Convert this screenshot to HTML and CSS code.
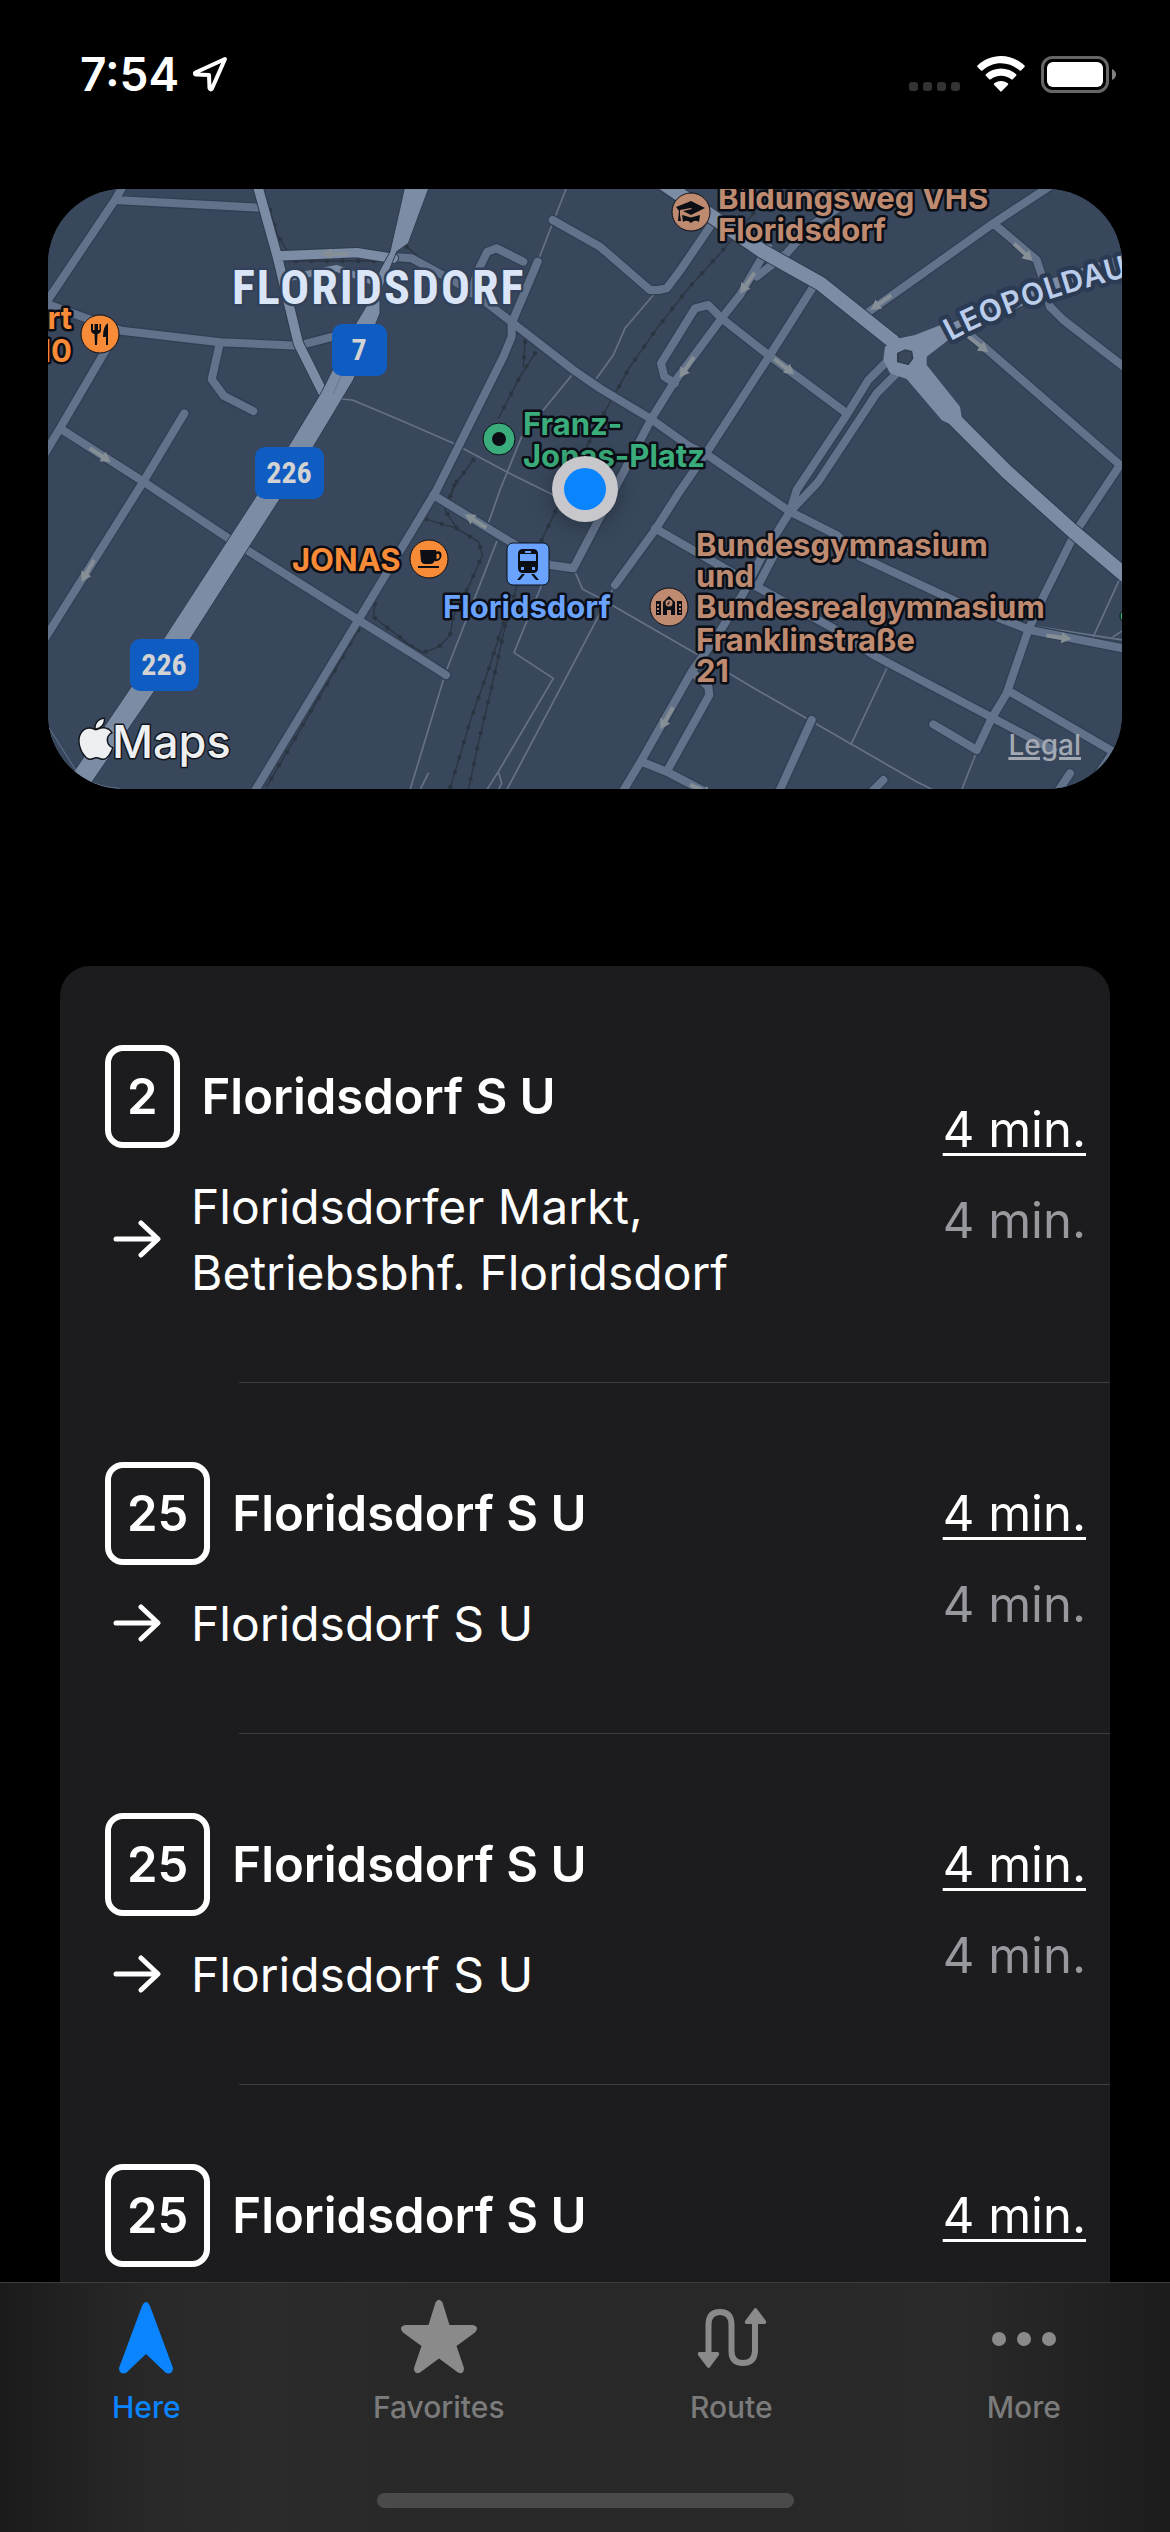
FILE: index.html
```html
<!DOCTYPE html>
<html lang="en">
<head>
<meta charset="utf-8">
<meta name="viewport" content="width=device-width, initial-scale=1">
<title>Departures nearby</title>
<link rel="stylesheet" href="styles.css">
</head>
<body>
<header class="status">
  <div class="status-side">
    <span class="clock">7:54</span>
    <svg class="location" viewBox="0 0 38 38" aria-hidden="true"><path d="M34 4 L4.500 17.500 Q3 19 5 19.500 L18 20 L18.500 33 Q19.500 35.500 21 33.500 Z" fill="none" stroke="#fff" stroke-width="4" stroke-linejoin="round"/></svg>
  </div>
  <div class="status-side status-right">
    <svg class="signal" viewBox="0 0 52 10" aria-hidden="true"><g fill="#333"><rect width="9" height="9" rx="3"/><rect x="14" width="9" height="9" rx="3"/><rect x="28" width="9" height="9" rx="3"/><rect x="42" width="9" height="9" rx="3"/></g></svg>
    <svg class="wifi" viewBox="0 0 48 36" aria-hidden="true"><g fill="#fff"><path d="M24 0C33 0 41 3.500 47.500 9.500Q48 10.200 47.500 11L44 14.600Q43.200 15 42.600 14.500C37.500 9.800 31 7.200 24 7.200S10.500 9.800 5.400 14.500Q4.800 15 4 14.600L.5 11Q0 10.200.5 9.500C7 3.500 15 0 24 0Z"/><path d="M24 12.500C29.800 12.500 35 14.600 39.200 18.300Q39.700 19 39.200 19.700L35.500 23.400Q34.800 23.800 34.200 23.300C31.400 21 28 19.700 24 19.700S16.600 21 13.800 23.300Q13.200 23.800 12.500 23.400L8.800 19.700Q8.300 19 8.800 18.300C13 14.600 18.200 12.500 24 12.500Z"/><path d="M24 25C26.800 25 29.200 25.900 31 27.400Q31.500 28 31 28.700L24.700 35.300Q24 36 23.300 35.300L17 28.700Q16.500 28 17 27.400C18.800 25.900 21.200 25 24 25Z"/></g></svg>
    <svg class="battery" viewBox="0 0 75 37" aria-hidden="true"><rect x="1.500" y="1.500" width="65" height="34" rx="10" fill="none" stroke="#666" stroke-width="3"/><rect x="6" y="6" width="56" height="25" rx="6" fill="#fff"/><path d="M71 13Q75 15 75 18.500T71 24Z" fill="#808080"/></svg>
  </div>
</header>

<main>
  <section class="map" aria-label="Map">
    <svg class="map-canvas" viewBox="0 0 1074 600" preserveAspectRatio="xMidYMid slice" aria-hidden="true">
      <defs>
        <path id="arrow" d="M-38 -6H8V-17L38 0L8 17V6H-38Z"/>
        <path id="leopoldau" d="M903 152Q975 112 1110 80"/>
        <g id="minor">
          <path d="M248 20L225 60L0 395M225 60L655 83M10 368L180 430L245 452L540 487L775 497L900 465M540 487L515 598L552 648L640 693M215 480L60 745L15 820M60 745L310 905L570 1078L955 1320L1140 1435L1218 1485M433 700L310 905L15 1375"/>
          <path d="M1493 245L1415 430V470L1390 530L1190 930L955 1320L640 1840M1050 230L1115 235L1290 330L1420 430L1600 570L1680 625L1830 715L1950 800L2010 830L2250 995L2390 1065L2460 1130L2750 1265L2970 1350L3260 1407"/>
          <path d="M1295 340L1310 280L1342 215L1370 205L1450 245M1538 120L1680 200L1830 330H1855L1880 325L1925 265L2030 110"/>
          <path d="M2185 200L2100 345L2045 415L1900 610L1835 715L1780 820L1600 1165L1530 1155L1410 1085L1180 945M2240 220L2310 140L2400 80M2240 220L2150 290"/>
          <path d="M2045 415L2005 375L1965 385L1863 550L1873 590L1905 610M2045 415L2185 525L2420 700M2320 320L2190 525L2005 810L1915 940L1845 1050L1725 1215M1845 1045L2150 1220L2380 1345L2500 1425L2860 1615L3040 1710"/>
          <path d="M2535 550L2485 600L2420 705L2270 930L2250 995L2160 1140L2110 1240L2030 1370L1955 1475L1805 1740L1745 1840M2570 580L2510 640L2335 905L2250 995M2210 1110L2155 1215M1955 1475L2005 1520L2008 1545L1880 1775M1805 1745L1880 1775L1995 1835M2315 1620L2215 1840"/>
          <path d="M3035 15L2860 130L2480 400M2860 130L2990 240L3010 300L3030 380L3070 420L3255 563M2760 440L2820 490L3240 855L3190 930L3110 1050L3010 1250L2965 1350L2900 1540L2855 1615L2810 1710L2680 1633M2910 1535L3220 1715L3150 1820M3090 1780L3050 1840M2500 1830L2530 1800"/>
        </g>
        <g id="rail">
          <path d="M2140 100L2045 215L1945 325L1855 440L1770 560L1700 685L1640 800L1505 1080L1430 1220L1395 1340L1360 1500L1315 1690L1285 1830M1390 1330L1345 1470L1295 1610L1230 1825M1485 520L1440 590L1375 715M1455 485L1450 560M1300 840L1240 920L1215 990L1250 1045M1250 905L1230 950M1160 1018L1250 1045L1315 1085L1328 1125L1290 1210L1240 1310L1230 1365L1198 1400L1150 1418L1080 1380M1005 1270L1000 1310L1110 1395M955 1350L830 1565L680 1820M690 90L710 160L740 210M720 243H1100L1140 250M1100 200L1130 225"/>
        </g>
      </defs>
      <rect width="1074" height="600" fill="#38475c"/>
      <g transform="scale(.333333) translate(-24 -27)" fill="none" stroke-linecap="round" stroke-linejoin="round">
        <g stroke="#2b3542">
          <use href="#rail" stroke-width="4"/>
          <use href="#rail" stroke-width="13" stroke-dasharray="0 47"/>
        </g>
        <path stroke="#657186" stroke-width="5" d="M905 657L937 660L1080 720L1240 790L1405 878L1540 945M1578 27L1493 245M1840 345L1755 445L1720 525L1670 595M1600 580L1510 690M1445 770L1380 930L1345 1030M1370 1085L1220 1470L1210 1500L1110 1830M1605 1175L1628 1228L1680 1255L1975 1425L2160 1535L2630 1805L2680 1830M1975 1425L1950 1475M1725 1215L1680 1300L1400 1830M1505 1215L1422 1418L1540 1495L1375 1775L1340 1830M1375 1775L1385 1810L1375 1830M2545 1455L2433 1693M2808 1720L2765 1830M3240 1195L3160 1370M2990 1340L3250 1380M3220 1370L3250 1350M1165 1780L1140 1830"/>
        <use href="#minor" stroke="#313f53" stroke-width="32"/>
        <use href="#minor" stroke="#62728a" stroke-width="24"/>
        <g stroke="#2f3b4d">
          <path stroke-width="34" d="M652 15L712 230L775 490L850 640M712 228L950 218L1060 235"/>
          <path stroke-width="48" d="M1870 10L2170 215L2340 310L2560 485M2720 695L2900 875L3100 1055L3260 1190M2640 490L2740 450L3000 330L3260 240"/>
        </g>
        <g stroke="#7c8ca5">
          <path stroke-width="20" d="M740 295L890 265L1000 305"/>
          <path stroke-width="28" d="M652 15L712 230L775 490L850 640M712 228L950 218L1060 235"/>
          <path stroke-width="42" d="M1870 10L2170 215L2340 310L2560 485M2720 695L2900 875L3100 1055L3260 1190M2640 490L2740 450L3000 330L3260 240"/>
        </g>
        <path fill="#7c8ca5" stroke="#2f3b4d" stroke-width="3" d="M1095 15L1083 70L1050 215L1020 270L975 385L945 435L845 635L745 800L370 1378L105 1770L60 1840H140L160 1800L450 1378L820 800L940 600L1020 400V340L1070 215L1105 190L1170 15Z"/>
        <path fill="none" stroke="#65758d" stroke-width="3" d="M880 640L905 585M25 1640L110 1775M30 1660Q60 1810 240 1826"/>
        <path fill="#7c8ca5" fill-rule="evenodd" d="M2535 500L2565 478L2625 465L2715 430L2725 480L2660 530V555L2760 680L2765 710L2735 735L2705 720L2600 597L2550 580L2530 540ZM2573 520L2595 510L2615 515L2618 535L2605 553L2573 545Z"/>
        <path stroke="#2f3b4d" stroke-width="4" fill="#38475c" d="M2573 520L2595 510L2615 515L2618 535L2605 553L2573 545Z"/>
        <g fill="#858f95">
          <use href="#arrow" transform="translate(883 221) rotate(180) scale(1.15 .9)"/>
          <use href="#arrow" transform="translate(181 825) rotate(33)"/>
          <use href="#arrow" transform="translate(143 1173) rotate(120)"/>
          <use href="#arrow" transform="translate(2122 310) rotate(125)"/>
          <use href="#arrow" transform="translate(1940 562) rotate(125)"/>
          <use href="#arrow" transform="translate(2233 560) rotate(38)"/>
          <use href="#arrow" transform="translate(2950 217) rotate(43)"/>
          <use href="#arrow" transform="translate(2523 368) rotate(145)"/>
          <use href="#arrow" transform="translate(2815 493) rotate(38)"/>
          <use href="#arrow" transform="translate(1307 1023) rotate(212)"/>
          <use href="#arrow" transform="translate(1880 1615) rotate(120)"/>
          <use href="#arrow" transform="translate(3057 1372) rotate(8)"/>
          <use href="#arrow" transform="translate(1985 1830) rotate(25)"/>
        </g>
      </g>

      <g class="shield">
        <rect x="284" y="135" width="55" height="52" rx="10"/><text x="311" y="171">7</text>
        <rect x="207" y="258" width="69" height="52" rx="10"/><text x="241" y="294">226</text>
        <rect x="82" y="450" width="69" height="52" rx="10"/><text x="116" y="486">226</text>
      </g>
      <text class="district" x="184" y="115">FLORIDSDORF</text>
      <text class="street"><textPath href="#leopoldau">LEOPOLDAU</textPath></text>

      <g class="poi food">
        <text x="24" y="140" text-anchor="end">rt</text>
        <text x="24" y="173" text-anchor="end">10</text>
        <text x="244" y="382">JONAS</text>
        <circle cx="52" cy="145" r="19"/>
        <circle cx="381" cy="370" r="19"/>
      </g>
      <g class="poi school">
        <text x="670" y="20">Bildungsweg VHS</text>
        <text x="670" y="52">Floridsdorf</text>
        <text x="648" y="367">Bundesgymnasium</text>
        <text x="648" y="398">und</text>
        <text x="648" y="429">Bundesrealgymnasium</text>
        <text x="648" y="462">Franklinstraße</text>
        <text x="648" y="493">21</text>
        <circle cx="643" cy="23" r="19"/>
        <circle cx="621" cy="418" r="19"/>
      </g>
      <g class="poi park">
        <text x="475" y="246">Franz-</text>
        <text x="475" y="278">Jonas-Platz</text>
        <circle cx="451" cy="250" r="16"/>
        <circle cx="1079" cy="427" r="7"/>
      </g>
      <g class="poi station">
        <text x="479" y="429" text-anchor="middle">Floridsdorf</text>
        <rect x="459" y="354" width="42" height="42" rx="6"/>
      </g>

      <g fill="#0c0e16">
        <circle cx="451" cy="250" r="7"/>
        <!-- fork and knife -->
        <path d="M43 135V141Q43 144 46.500 145L47 156H49L49.500 145Q53 144 53 141V135H51.500V141H50V135H46.500V141H45V135ZM60 134Q55 137 55 148H58V156H60Z"/>
        <!-- coffee cup -->
        <path d="M372 361H388V362.500Q394 361 393.500 367Q392.500 373 386.500 372Q385.500 375 382 375H377Q374 375 373 372ZM388.500 365V370Q391.500 370 391.500 367Q391.500 364 388.500 365ZM370 377H391V379H370Z" fill-rule="evenodd"/>
        <!-- graduation cap -->
        <path d="M628 18L643 12L657 19L643 26L635 22L644 20L643 19L632 21V26L633 32H630L631 22ZM634 26L643 28.500L652 26L651 33Q647 30 643 34Q639 30 635 33Z"/>
        <!-- school building -->
        <path d="M608 412H613V426H608ZM629 412H634V426H629ZM615 426V413L621 407L627 413V426H623V421H619V426ZM617.500 414A3.300 3.300 0 1 0 624.500 414A3.300 3.300 0 1 0 617.500 414Z" fill-rule="evenodd"/>
        <!-- train -->
        <path d="M475 360H485Q490 360 490 365V379Q490 384 485 384H475Q470 384 470 379V365Q470 360 475 360ZM472 365V372H488V365ZM477 362V364H483V362ZM473 378V381H476V378ZM484 378V381H487V378ZM474 385H477L472 391H469ZM483 385H486L491 391H488Z" fill-rule="evenodd"/>
      </g>
      <path d="M610 415V424M632 415V424" stroke="#be8a70" stroke-width="2" stroke-dasharray="2 2"/>
      <path d="M621 415V412.500M621 415H619" stroke="#0c0e16" stroke-width="1"/>

      <g class="brand">
        <path transform="translate(28 530) scale(1.65)" stroke-width="1.800" d="M12.152 6.896c-.948 0-2.415-1.078-3.960-1.040-2.040.027-3.910 1.183-4.961 3.014-2.117 3.675-.546 9.103 1.519 12.090 1.013 1.454 2.208 3.090 3.792 3.039 1.520-.065 2.090-.987 3.935-.987 1.831 0 2.350.987 3.960.948 1.637-.026 2.676-1.480 3.676-2.948 1.156-1.688 1.636-3.325 1.662-3.415-.039-.013-3.182-1.221-3.220-4.857-.026-3.040 2.480-4.494 2.597-4.559-1.429-2.090-3.623-2.324-4.390-2.376-2-.156-3.675 1.090-4.610 1.090zM15.530 3.830c.843-1.012 1.400-2.427 1.245-3.830-1.207.052-2.662.805-3.532 1.818-.780.896-1.454 2.338-1.273 3.714 1.338.104 2.715-.688 3.559-1.701"/>
        <text x="64" y="569">Maps</text>
      </g>
      <circle class="here-glow" cx="537" cy="303" r="35"/>
      <circle cx="537" cy="300" r="33" fill="#c7c7cc"/>
      <circle cx="537" cy="300" r="21" fill="#0a84ff"/>
    </svg>
    <a class="legal" href="#legal">Legal</a>
  </section>

  <ul class="departures">
    <li class="row">
      <div class="trip">
        <h2 class="stop"><span class="line">2</span>Floridsdorf S U</h2>
        <p class="towards"><svg class="to" viewBox="0 0 48 40" aria-hidden="true"><path d="M3 19H44M28 3L45 19L28 35"/></svg><span>Floridsdorfer Markt,<br>Betriebsbhf. Floridsdorf</span></p>
      </div>
      <div class="times"><span class="next">4 min.</span><span class="later">4 min.</span></div>
    </li>
    <li class="row">
      <div class="trip">
        <h2 class="stop"><span class="line">25</span>Floridsdorf S U</h2>
        <p class="towards"><svg class="to" viewBox="0 0 48 40" aria-hidden="true"><path d="M3 19H44M28 3L45 19L28 35"/></svg><span>Floridsdorf S U</span></p>
      </div>
      <div class="times"><span class="next">4 min.</span><span class="later">4 min.</span></div>
    </li>
    <li class="row">
      <div class="trip">
        <h2 class="stop"><span class="line">25</span>Floridsdorf S U</h2>
        <p class="towards"><svg class="to" viewBox="0 0 48 40" aria-hidden="true"><path d="M3 19H44M28 3L45 19L28 35"/></svg><span>Floridsdorf S U</span></p>
      </div>
      <div class="times"><span class="next">4 min.</span><span class="later">4 min.</span></div>
    </li>
    <li class="row">
      <div class="trip">
        <h2 class="stop"><span class="line">25</span>Floridsdorf S U</h2>
        <p class="towards"><svg class="to" viewBox="0 0 48 40" aria-hidden="true"><path d="M3 19H44M28 3L45 19L28 35"/></svg><span>Floridsdorf S U</span></p>
      </div>
      <div class="times"><span class="next">4 min.</span><span class="later">4 min.</span></div>
    </li>
  </ul>
</main>

<nav class="tabs">
  <div class="tab-row">
    <button class="tab active" type="button"><svg class="tab-icon" viewBox="0 0 80 80" aria-hidden="true"><path d="M36 7Q40 -1 44 7L67 69Q67 76 60 74L40 55L20 74Q13 76 13 69Z"/></svg>Here</button>
    <button class="tab" type="button"><svg class="tab-icon" viewBox="0 0 80 80" aria-hidden="true"><path d="M36.500 3.500Q40 -2 43.500 3.500L50.500 26H74Q81 28 76 33.500L57.500 47L65 69Q65 76 59 73.500L40 59.500L21 73.500Q15 76 15 69L22.500 47L4 33.500Q-1 28 6 26H29.500Z"/></svg>Favorites</button>
    <button class="tab" type="button"><svg class="tab-icon" viewBox="0 0 80 80" aria-hidden="true"><path d="M17.500 56V26Q17.500 13 29 13T40.500 26V52Q40.500 64 52 64T64 52V22" fill="none" stroke="currentColor" stroke-width="6"/><path d="M8 53H27Q29 54 28 56L19 68Q17.500 70 16 68L7 56Q6 54 8 53ZM55 25H74Q76 24 75 22L66 10Q64.500 8 63 10L54 22Q53 24 55 25Z"/></svg>Route</button>
    <button class="tab" type="button"><svg class="tab-icon" viewBox="0 0 80 80" aria-hidden="true"><circle cx="15" cy="40" r="7"/><circle cx="40" cy="40" r="7"/><circle cx="65" cy="40" r="7"/></svg>More</button>
  </div>
  <div class="home-bar"></div>
</nav>
</body>
</html>
```
FILE: styles.css
```css
* { box-sizing: border-box; }

body {
  margin: 0;
  background: #000;
  color: #fff;
  font-family: Inter, "Liberation Sans", sans-serif;
}

svg { display: block; flex: none; }

/* status bar */
.status {
  display: flex;
  justify-content: space-between;
  padding: 44px 54px 85px 80px;
}
.status-side {
  display: flex;
  align-items: center;
  gap: 12px;
  height: 60px;
}
.status-right { gap: 16px; }
.clock { font-size: 46px; font-weight: 600; line-height: 60px; }
.location { width: 38px; height: 38px; }
.signal { width: 52px; height: 10px; align-self: flex-end; margin-bottom: 12px; }
.wifi { width: 48px; height: 36px; }
.battery { width: 75px; height: 37px; }

/* map */
.map {
  position: relative;
  height: 600px;
  margin: 0 48px;
  border-radius: 75px;
  overflow: hidden;
  background: #38475c;
}
.map-canvas { width: 100%; height: 100%; }
.map-canvas text { paint-order: stroke; stroke-linejoin: round; }
.shield rect { fill: #0f5dc2; }
.shield text {
  fill: #d3d3d3;
  font: 700 30px "Liberation Sans Narrow", "Roboto Condensed", Roboto, sans-serif;
  text-anchor: middle;
}
.district {
  fill: #dae5f7;
  stroke: #33425a;
  stroke-width: 5px;
  font: 700 48px "Liberation Sans Narrow", "Roboto Condensed", Roboto, sans-serif;
  letter-spacing: 2px;
}
.street {
  fill: #bccdec;
  stroke: #2b3b54;
  stroke-width: 9px;
  font-size: 30px;
  font-weight: 600;
  letter-spacing: 1px;
}
.poi text {
  font-size: 31px;
  font-weight: 700;
  stroke: #0c0e16;
  stroke-width: 5px;
}
.poi circle, .poi rect { stroke: #0c0e16; stroke-width: 1px; }
.food { fill: #f88b38; }
.school { fill: #be8a70; }
.park { fill: #3bac7b; }
.station { fill: #69a3ff; }
.brand { fill: #eeeff1; stroke: #11151c; stroke-width: 3px; }
.brand path { paint-order: stroke; }
.brand text { font-size: 45px; font-weight: 500; }
.here-glow { fill: #000; opacity: 0.25; filter: blur(10px); }
.legal {
  position: absolute;
  right: 41px;
  bottom: 26px;
  color: #a3a9b3;
  font-size: 28px;
  font-weight: 500;
  line-height: 36px;
  text-decoration-thickness: 3px;
}

/* departures */
.departures {
  list-style: none;
  margin: 177px 60px 0;
  padding: 0;
  border-radius: 30px 30px 0 0;
  background: #1c1c1e;
}
.row {
  display: flex;
  align-items: center;
  justify-content: space-between;
  padding: 79px 24px 76px 45px;
}
.row + .row {
  border-top: 1px solid;
  border-image: linear-gradient(to right, #1c1c1e 180px, #3d3d40 180px) 1;
}
.trip { display: grid; gap: 26px; }
.stop {
  display: flex;
  align-items: center;
  gap: 22px;
  margin: 0;
  font-size: 49px;
  font-weight: 600;
}
.line {
  min-width: 73px;
  padding: 0 16px;
  border: 6px solid #fff;
  border-radius: 18px;
  line-height: 91px;
  text-align: center;
}
.towards {
  display: flex;
  align-items: center;
  gap: 30px;
  margin: 0;
  padding-left: 8px;
  font-size: 48px;
  line-height: 66px;
}
.to {
  width: 48px;
  height: 40px;
  fill: none;
  stroke: #fff;
  stroke-width: 5px;
  stroke-linecap: round;
  stroke-linejoin: round;
}
.times {
  display: grid;
  gap: 25px;
  font-size: 49px;
  line-height: 66px;
  text-align: right;
}
.next {
  text-decoration: underline;
  text-decoration-thickness: 3px;
  text-underline-offset: 6px;
}
.later { color: #98989f; }

/* tab bar */
.tabs {
  position: fixed;
  inset: auto 0 0;
  padding: 16px 0 24px;
  border-top: 1px solid #3d3d40;
  background: linear-gradient(to right, #1b1b1b, #282828 12%, #2b2b2b 22%, #282828 38%, #282828 70%, #2a2a2a 82%, #1b1c1b);
}
.tab-row {
  display: grid;
  grid-template-columns: repeat(4, 1fr);
}
.tab {
  display: flex;
  flex-direction: column;
  align-items: center;
  gap: 10px;
  padding: 0;
  border: 0;
  background: none;
  color: #7b7b7b;
  font: 500 30px/36px Inter, "Liberation Sans", sans-serif;
}
.tab-icon { width: 80px; height: 80px; fill: currentColor; color: #8a8a8a; }
.active, .active .tab-icon { color: #0a84ff; }
.home-bar {
  width: 417px;
  height: 15px;
  margin: 68px auto 0;
  border-radius: 8px;
  background: #4a4a4a;
}
```
